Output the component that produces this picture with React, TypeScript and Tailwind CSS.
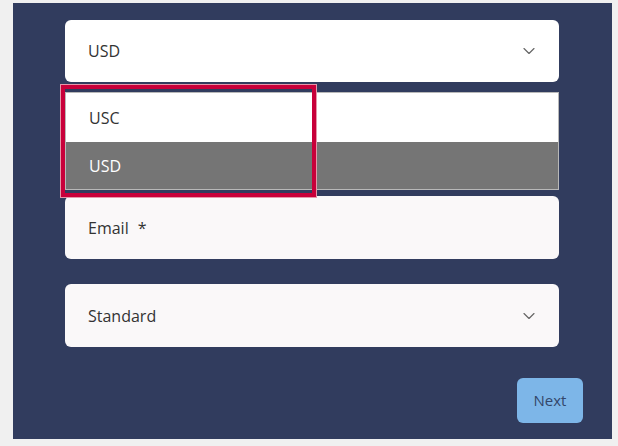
import React from 'react';
import { ChevronDown } from 'lucide-react';

const FONT = { fontFamily: '"Open Sans", "Noto Sans", Arial, sans-serif' };

function SelectBox({ value }: { value: string }) {
  return (
    <div className="flex h-[63px] w-[494px] items-center justify-between rounded-[6px] bg-[#faf8f9] pl-[23px] pr-[20px] text-[16px] text-[#333]">
      <span>{value}</span>
      <ChevronDown size={20} strokeWidth={1.4} className="text-[#666]" />
    </div>
  );
}

export default function App() {
  return (
    <div className="h-[446px] w-[618px] bg-[#f0f0f0] pt-[3px] pl-[13px]" style={FONT}>
      <div className="relative flex h-[436px] w-[599px] flex-col bg-[#313c5e] pt-[17px] pl-[52px]">
        {/* Currency select (open) */}
        <div className="flex h-[62px] w-[494px] items-center justify-between rounded-[6px] bg-white pl-[23px] pr-[20px] text-[16px] text-[#333]">
          <span>USD</span>
          <ChevronDown size={20} strokeWidth={1.4} className="text-[#666]" />
        </div>

        <div className="mt-[10px] flex w-[494px] flex-col border border-[#b8b8b8] bg-white text-[16px]">
          <div className="flex h-[49px] items-center pl-[23px] text-[#333]">USC</div>
          <div className="flex h-[47px] items-center bg-[#757575] pl-[23px] text-white">USD</div>
        </div>

        {/* Email */}
        <div className="mt-[6px] flex h-[63px] w-[494px] items-center rounded-[6px] bg-[#faf8f9] pl-[23px] text-[16px] text-[#333]">
          <span>Email</span>
          <span className="ml-[9px]">*</span>
        </div>

        <div className="mt-[25px]">
          <SelectBox value="Standard" />
        </div>

        <div className="mt-[31px] flex w-[518px] justify-end">
          <button className="h-[45px] w-[66px] rounded-[6px] bg-[#7db6e8] text-[15px] text-[#33466a]">
            Next
          </button>
        </div>

        {/* Annotation highlight */}
        <div className="absolute left-[47px] top-[81px] h-[114px] w-[257px] border border-[#e596a9]">
          <div className="h-full w-full border-[4px] border-[#c8003a]" />
        </div>
      </div>
    </div>
  );
}
